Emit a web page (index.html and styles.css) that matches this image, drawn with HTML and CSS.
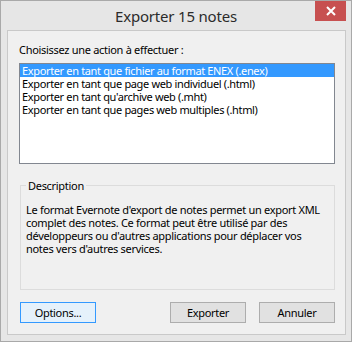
FILE: index.html
```html
<!DOCTYPE html>
<html>
<head>
<meta charset="utf-8">
<link rel="stylesheet" href="styles.css">
</head>
<body>
<div class="window">
  <div class="titlebar">
    <span class="title">Exporter 15 notes</span>
    <div class="close">
      <svg width="10" height="10" viewBox="0 0 10 10"><path d="M1 1 L9 9 M9 1 L1 9" stroke="#fff" stroke-width="2"/></svg>
    </div>
  </div>
  <div class="client">
    <div class="label">Choisissez une action à effectuer :</div>
    <div class="listbox">
      <div class="item selected">Exporter en tant que fichier au format ENEX (.enex)</div>
      <div class="item">Exporter en tant que page web individuel (.html)</div>
      <div class="item">Exporter en tant qu'archive web (.mht)</div>
      <div class="item">Exporter en tant que pages web multiples (.html)</div>
    </div>
    <div class="group">
      <span class="legend">Description</span>
      <p class="desc">Le format Evernote d'export de notes permet un export XML complet des notes. Ce format peut être utilisé par des développeurs ou d'autres applications pour déplacer vos notes vers d'autres services.</p>
    </div>
    <div class="buttons">
      <button class="btn focused">Options...</button>
      <div class="spacer"></div>
      <button class="btn">Exporter</button>
      <button class="btn">Annuler</button>
    </div>
  </div>
</div>
</body>
</html>
```
FILE: styles.css
```css
html, body { margin: 0; padding: 0; }
body { font-family: "Noto Sans", "DejaVu Sans", sans-serif; font-size: 11px; color: #000; }
.window {
  width: 352px; height: 342px; box-sizing: border-box;
  border: 1px solid #a9a9a9; background: #e6e6e6;
  display: flex; flex-direction: column;
}
.titlebar {
  height: 29px; position: relative;
  display: flex; align-items: center; justify-content: center;
}
.title { font-size: 15px; color: #2b2b2b; padding-top: 1px; letter-spacing: -0.2px; }
.close {
  position: absolute; top: 0; right: 5px; width: 31px; height: 20px;
  background: #c75050; display: flex; align-items: center; justify-content: center;
}
.client {
  flex: 1; margin: 0 5px 6px 6px; border: 1px solid #c9c9c9;
  background: #f0f0f0; padding: 11px 10px 0 11px;
  display: flex; flex-direction: column;
}
.label { line-height: 15px; height: 15px; letter-spacing: -0.3px; }
.listbox {
  margin-top: 6px; height: 99px; border: 1px solid #828790; background: #fff;
  padding: 0;
}
.item { height: 13px; line-height: 13px; padding-left: 2px; letter-spacing: -0.35px; white-space: nowrap; }
.item.selected { background: #3399ff; color: #fff; }
.group {
  position: relative; margin: 21px 0 0 1px; height: 103px;
  border: 1px solid #dcdcdc; padding: 0 5px 0 5px;
}
.legend {
  position: absolute; top: -8px; left: 5px; padding: 0 2px;
  background: #f0f0f0; line-height: 15px; letter-spacing: -0.3px;
}
.desc { margin: 17px 0 0; line-height: 13px; letter-spacing: -0.3px; }
.buttons { display: flex; margin-top: 12px; gap: 13px; padding-left: 1px; }
.spacer { flex: 1; }
.btn {
  width: 76px; height: 21px; box-sizing: border-box; margin: 0;
  border: 1px solid #adadad; background: #e1e1e1; font: inherit; letter-spacing: -0.3px;
  color: #000; padding: 0;
}
.btn.focused { border-color: #3399ff; background: #e5f1fb; }
```
